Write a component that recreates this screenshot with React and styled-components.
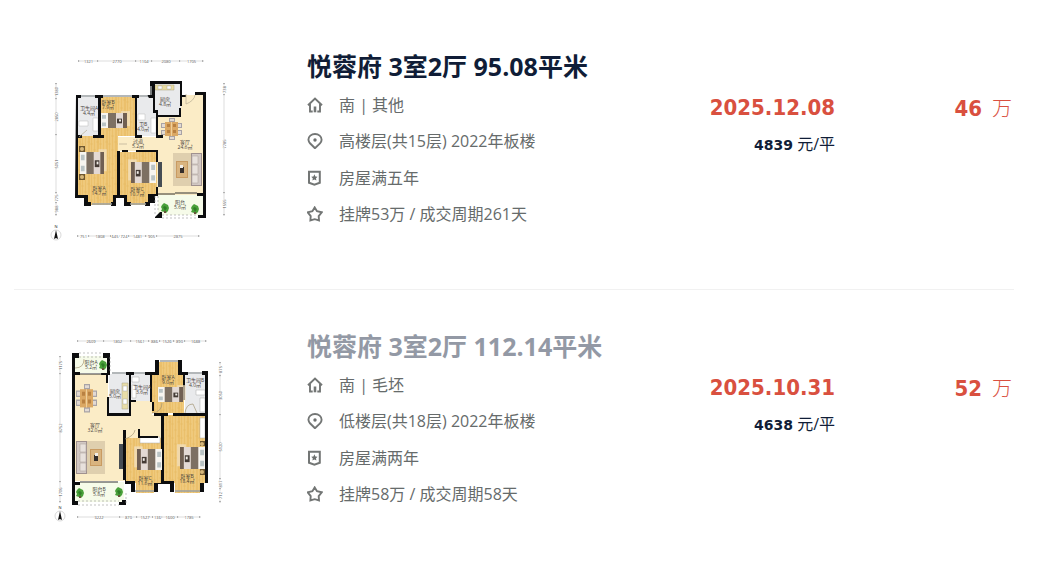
import React from "react";
import styled, { createGlobalStyle } from "styled-components";

const GlobalStyle = createGlobalStyle`
  *, *::before, *::after { box-sizing: border-box; }
  body {
    margin: 0;
    background: #ffffff;
    font-family: "Open Sans", "Noto Sans CJK SC", sans-serif;
  }
`;

const List = styled.main`
  padding: 10px 37px 0 14px;
`;

const Listing = styled.article`
  display: grid;
  grid-template-columns: 293px minmax(0, 1fr) auto 177px;
  height: 280px;
  padding-top: 36px;
  padding-right: 2px;
  border-bottom: 1px solid #f1f1f1;

  &:last-child {
    height: auto;
    border-bottom: 0;
  }
`;

const PlanLink = styled.a`
  display: block;
  padding-left: 34px;
`;

const Plan = styled.svg`
  display: block;
  width: 186px;
  height: 200px;
`;

const Title = styled.h2`
  margin: 0;
  font-size: 25px;
  line-height: 40px;
  font-weight: 700;
  white-space: nowrap;

  a {
    color: ${(p) => (p.$visited ? "#9399a5" : "#101d37")};
    text-decoration: none;
  }
`;

const Facts = styled.ul`
  display: grid;
  grid-template-rows: 37px 36px 38px 34px;
  margin: 0;
  padding: 0;
  list-style: none;
`;

const Fact = styled.li`
  display: flex;
  align-items: center;
  gap: 16px;
  color: #666b6b;
  font-size: 16px;
  line-height: 24px;
  white-space: nowrap;
`;

const Icon = styled.svg`
  flex: none;
  width: 16px;
  height: 16px;
  fill: none;
  stroke: #737675;
  stroke-width: 1.9;
`;

const Deal = styled.div`
  padding-top: 42px;
  text-align: right;
  white-space: nowrap;
`;

const Figure = styled.div`
  color: #d9503f;
  font-family: "DejaVu Sans Condensed", "DejaVu Sans", "Noto Sans CJK SC", sans-serif;
  font-size: 22px;
  line-height: 40px;
  font-weight: 700;
`;

const Unit = styled.span`
  margin-left: 10px;
  font-family: "Noto Sans CJK SC", sans-serif;
  font-size: 20px;
  font-weight: 300;
`;

const UnitPrice = styled.div`
  color: #101d37;
  font-family: "Open Sans", "Noto Sans CJK SC", sans-serif;
  font-size: 16px;
  line-height: 32px;

  strong {
    font-family: "DejaVu Sans", sans-serif;
    font-size: 14px;
  }
`;

const icons = {
  home: (
    <>
      <path d="M1 8.2 8 1.5l7 6.7M3 6.8v7.7h2.7M13 6.8v7.7h-2.7" />
      <path d="M8 9.5v5.8" strokeWidth="2.6" />
    </>
  ),
  pin: (
    <>
      <path d="M8 15.2 3 10.3a6.6 6.6 0 0 1-1.6-3.6C1.4 3.5 4.3 1 8 1s6.6 2.5 6.6 5.7c0 1.3-.6 2.6-1.6 3.6z" />
      <circle cx="8" cy="7" r="1.7" fill="#6d706f" stroke="none" />
    </>
  ),
  badge: (
    <>
      <path d="M2 1.8h10.8v10.9L7.4 14.6 2 12.7z" strokeWidth="2" />
      <path d="m7.4 4.3 1 2.1 2.2.3L9 8.3l.4 2.3-2-1.1-2 1.1.4-2.3-1.6-1.6 2.2-.3z" fill="#6d706f" stroke="none" />
    </>
  ),
  star: <path d="M7.7 1.4 10 5.2l4.8 1.1-3.1 3.8.3 4.4-4.3-1.3-4.3 1.3.3-4.4L.7 6.3l4.7-1.1z" />,
};

const Floor = ({ d, fill }) => <path d={d} fill={fill} />;

function Label({ x, y, name, area }) {
  return (
    <text x={x} y={y} fontSize="5" fill="#4a443d" textAnchor="middle">
      <tspan x={x}>{name}</tspan>
      <tspan x={x} dy="5">{area}</tspan>
    </text>
  );
}

function Bed({ x, y, length = 26, width = 16, flip }) {
  const sx = length / 26;
  const sy = width / 16;
  return (
    <g transform={flip ? `translate(${x + length} ${y}) scale(${-sx} ${sy})` : `translate(${x} ${y}) scale(${sx} ${sy})`}>
      <path d="M20 -2h9v16h-9z" fill="#f2e3c6" opacity=".7" />
      <path d="M0 0h26v16H0z" fill="#e9dfd4" />
      <path d="M0 0h7v16H0z" fill="#f7f5f0" />
      <path d="M1 2h4v4H1zM1 10h4v4H1z" fill="#b9c3c4" />
      <path d="M7 0h8v16H7z" fill="#7d7063" />
      <path d="M15 0h7v16h-7z" fill="#e3d9d4" />
      <path d="M22 0h4v16h-4z" fill="#705f52" />
      <path d="M16 6h5v5h-5z" fill="#453b35" />
      <path d="M18 7h2v2h-2z" fill="#f2eee8" />
    </g>
  );
}

function Dining({ x, y, upright }) {
  return (
    <g transform={upright ? `translate(${x} ${y}) scale(1 1.3)` : `translate(${x} ${y})`}>
      <path d="M0 5h21v5H0zM0 12h21v5H0zM8 0h6v22H8z" fill="#a8a3a6" />
      <path d="M1 6h3v3H1zM1 13h3v3H1zM17 6h3v3h-3zM17 13h3v3h-3zM9 1h4v2H9zM9 19h4v2H9z" fill="#e2dad3" />
      <path d="M4 4h13v14H4z" fill="#dba864" />
      <path d="M6 6h3v3H6zM12 6h3v3h-3zM6 12h3v3H6zM12 12h3v3h-3z" fill="#b98142" />
      <path d="M10 4h1v14h-1z" fill="#f0d09b" />
    </g>
  );
}

function Sofa({ x, y, flip }) {
  return (
    <g transform={flip ? `translate(${x + 29} ${y}) scale(-1 1)` : `translate(${x} ${y})`}>
      <path d="M6 0h23v33H6z" fill="#dfcfae" />
      <path d="M0 0h11v33H0z" fill="#a0918f" />
      <path d="M1 1h9v31H1z" fill="#d2c8c4" />
      <path d="M4 3h6v8H4zM4 12h6v9H4zM4 22h6v8H4z" fill="#e8e1dc" stroke="#b3a7a2" strokeWidth=".6" />
      <path d="M14 8h12v17H14z" fill="#c99b62" />
      <path d="M15 9h10v15H15z" fill="#d9b47f" />
      <path d="M18 14h4v6h-4z" fill="#352e2b" />
      <path d="M19 12h3v3h-3z" fill="#f2eee8" />
    </g>
  );
}

function Plant({ x, y }) {
  return (
    <g transform={`translate(${x} ${y})`}>
      <path d="M-1-5 1-4 3-3 4 0 3 3 1 5-1 4-4 3-3 1-4-1-3-3z" fill="#49a03a" />
      <path d="M-2-1 0-2 2 0 0 3z" fill="#2f7d26" />
      <path d="M-1 3h2v2h-2z" fill="#69533b" />
    </g>
  );
}

function Dimensions({ stops, at, vertical }) {
  return (
    <g transform={vertical ? `translate(${at} 0) rotate(90)` : `translate(0 ${at})`} fontSize="4" fill="#505050" textAnchor="middle">
      <path
        d={stops.slice(1).map(([end], i) => `M${stops[i][0] + 1} 0H${end - 1}`).join("")}
        stroke="#c8c8c8"
        strokeWidth=".6"
      />
      {stops.map(([pos]) => (
        <path key={pos} d={`M${pos - 1} -1l2 1-2 1z`} fill="#999" />
      ))}
      {stops.slice(1).map(([end, text], i) => (
        <g key={end}>
          <path d={`M${(stops[i][0] + end) / 2 - 4} -1h8v2h-8z`} fill="#fff" />
          <text x={(stops[i][0] + end) / 2} y="1.5" transform={vertical ? `rotate(180 ${(stops[i][0] + end) / 2} 0)` : undefined}>{text}</text>
        </g>
      ))}
    </g>
  );
}

function Compass({ x, y }) {
  return (
    <g transform={`translate(${x} ${y})`}>
      <circle r="5" fill="#fff" stroke="#c9c9c9" strokeWidth=".7" />
      <path d="M0-5 2 4 0 3-2 4z" fill="#111" />
      <text y="-7" fontSize="4" fill="#222" textAnchor="middle">N</text>
    </g>
  );
}

const GRAY = "#e9eaec";
const WOOD = "#ebc06c";
const CREAM = "#fbecc6";
const BALCONY = "#f6fbe9";

function Grain({ id }) {
  return (
    <defs>
      <pattern id={id} width="9" height="14" patternUnits="userSpaceOnUse">
        <path d="M0 0h9v14H0z" fill={WOOD} />
        <path d="M0 0v14M3 0v14M6 0v14" stroke="#f3d28c" strokeWidth="1" />
        <path d="M0 4h3M3 10h3M6 2h3" stroke="#e3b65e" strokeWidth=".5" />
      </pattern>
    </defs>
  );
}

function FirstPlan() {
  return (
    <Plan viewBox="48 46 186 200" role="img" aria-label="悦蓉府 95.08平米 户型图">
      <Grain id="woodA" />
      <Floor d="M118 137h38V117h25V95h22v100h-46v-44h-39z" fill={CREAM} />
      <Floor d="M78 97h21v39H78zM137 97h16v13h4v26h-20zM152 83h29v33h-29z" fill={GRAY} />
      <Floor d="M101 97h34v39h-17v59h-5v10H88v-10H78v-59h23zM119 152h38v43h-7v10h-23v-10h-8z" fill="url(#woodA)" />
      <Floor d="M158 195h46v20h-46z" fill={BALCONY} />
      <Floor d="M118 137h38v13h-38z" fill={CREAM} />
      <path d="M79 121h9v5h-9zM93 118h5v13h-5zM138 114h7v6h-7zM151 118h5v15h-5z" fill="#fff" stroke="#bbb" strokeWidth=".5" />
      <path d="M155 85h19v5h-19z" fill="#e9dca1" stroke="#a9a07c" strokeWidth=".5" />
      <path d="M158 86h4v3h-4zM167 86h4v3h-4z" fill="#fff" stroke="#999" strokeWidth=".4" />
      <path d="M76 95h5v3h-3v37h4v3h-4v57h10v7h3v4h-7v-8h-9zM95 95h8v3h-2v37h3v3H93v-3h5V98h-3zM132 95h7v3h-2v37h5v3h-7V98h-3zM147 95h3V81h32v14h4v2h-4v9h-2V84h-25v26h3v25h5v3h-7v-25h-3V98h-4zM195 92h11v126h-8v-3h5v-19h-6v-3h6V95h-8zM157 115h22v-7h2v9h-24zM117 151h3v44h7v7h4v4h-7v-8h-8v8h-5v-4h2v-7h4zM136 150h22v12h-2v-10h-20zM122 150h6v2h-6zM156 187h2v9h-3v7h-5v3h-5v-4h3v-8h8zM155 217 160 212h2v6h-7z" fill="#0c0d0f" />
      <path d="M92 204h20M130 204h16M81 96h14M103 96h29M139 96h9M151 86v9" stroke="#9ba0a2" strokeWidth="1.5" />
      <path d="M158 194h17M175 193h22" stroke="#333" />
      <path d="M158 196v16M155 196v20M162 215h36M162 218h36" fill="none" stroke="#999" strokeWidth=".6" strokeDasharray="2 2" />
      <path d="M186 94v10q8-3 9-9M119 144h8M79 137l8-7" fill="none" stroke="#b8ad94" strokeWidth=".7" />
      <Bed x={101} y={113} width={15} />
      <Bed x={80} y={152} length={24} width={22} />
      <Bed x={131} y={162} length={25} width={21} flip />
      <path d="M79 146h6v6h-6zM79 174h6v6h-6z" fill="#6e572f" />
      <circle cx="82" cy="149" r="2" fill="#d6b77a" />
      <circle cx="82" cy="177" r="2" fill="#d6b77a" />
      <Dining x={161} y={118} />
      <Sofa x={173} y={153} flip />
      <path d="M158 162h4v25h-4z" fill="#464d54" />
      <Plant x={165} y={208} />
      <Plant x={195} y={209} />
      <Label x={89} y={110} name="卫生间A" area="4.4㎡" />
      <Label x={108} y={104} name="卧室B" area="7.9㎡" />
      <Label x={165} y={101} name="厨房" area="4.8㎡" />
      <Label x={143} y={126} name="卫B" area="4.0㎡" />
      <Label x={138} y={143} name="过道" area="5.2㎡" />
      <Label x={185} y={144} name="客厅" area="24.6㎡" />
      <Label x={99} y={190} name="卧室A" area="14.7㎡" />
      <Label x={137} y={191} name="卧室C" area="10.7㎡" />
      <Label x={180} y={204} name="阳台" area="5.6㎡" />
      <Dimensions at={61} stops={[[79], [98, "1321"], [136, "2770"], [152, "1104"], [180, "2080"], [203, "1705"]]} />
      <Dimensions at={56} vertical stops={[[84], [99, "1380"], [135, "2850"], [193, "5051"], [203, "775"], [215, "988"]]} />
      <Dimensions at={224} vertical stops={[[84], [95, "738"], [193, "7785"], [215, "1555"]]} />
      <Dimensions at={236} stops={[[78], [89, "751"], [111, "1808"], [119, "645"], [129, "724"], [146, "1481"], [157, "905"], [199, "2875"]]} />
      <Compass x={56} y={235} />
    </Plan>
  );
}

function SecondPlan() {
  return (
    <Plan viewBox="48 326 186 200" role="img" aria-label="悦蓉府 112.14平米 户型图">
      <Grain id="woodB" />
      <Floor d="M74 374h34v41h23v-15h21v15h10v23h-37v43H74z" fill={CREAM} />
      <Floor d="M109 374h20v40h-20zM131 374h20v27h-20zM185 374h21v40h-21z" fill={GRAY} />
      <Floor d="M158 362h21v12h5v39h-32v-39h6zM125 438h36v45h-7v10h-18v-10h-11zM163 415h43v68h-6v10h-25v-10h-12z" fill="url(#woodB)" />
      <Floor d="M75 356h33v17H75zM75 482h49v20H75z" fill={BALCONY} />
      <path d="M122 383h6v26h-6z" fill="#e8dda8" stroke="#aaa38a" strokeWidth=".5" />
      <path d="M123 386h4v5h-4zM123 399h4v5h-4zM132 377h7v5h-7zM132 385h4v13h-4zM196 390h9v5h-9zM200 398h5v14h-5zM140 437h20v6h-20zM200 418h5v20h-5z" fill="#fff" stroke="#aaa" strokeWidth=".5" />
      <path d="M72 353h7v5h-4v14h5v3h-5v107h5v3h-5v16h3v4h-6zM103 353h7v22h-2v8h-2v-8h-5v-2h6v-15h-4zM107 397h2v16h20v-38h-3v-3h8v3h-3v25h5v2h-5v14h-24zM145 372h10v-12h4v15h-7v27h-2v-27h-5zM178 360h4v12h6v3h-3v25h-2v-25h-5zM202 371h6v112h-4v9h-4v-9h5v-67h-32v-3h32v-38h-3zM154 413h14v3h-4v65h10v11h-4v-8h-12v8h-4v-9h7v-67h-7zM152 402h2v9h-2zM123 430h3v51h9v11h-4v-8h-6v-4h-2zM138 429h2v7h18v2h-20zM122 500h4v5h-7v-3h3z" fill="#0c0d0f" />
      <path d="M160 361h18M112 373h14M134 373h11M188 373h14M135 491h19M175 491h25" stroke="#9ba0a2" strokeWidth="1.5" />
      <path d="M80 374h22M80 482h38" stroke="#333" />
      <path d="M79 353h24M79 357h24M78 501h41M78 505h41M126 493v12M110 357v15" fill="none" stroke="#999" strokeWidth=".6" strokeDasharray="2 2" />
      <path d="M75 368q9 0 9-9M152 413q10-1 10-10M185 413q1-9 8-9l4 9M125 439q9-3 10-9" fill="none" stroke="#a59776" strokeWidth=".7" />
      <Dining x={76} y={384} upright />
      <Sofa x={76} y={441} />
      <path d="M119 444h4v25h-4z" fill="#464d54" />
      <Bed x={158} y={387} length={25} width={15} />
      <Bed x={137} y={449} length={25} width={21} flip />
      <Bed x={180} y={447} length={25} width={22} flip />
      <path d="M200 441h5v5h-5zM200 469h5v6h-5z" fill="#6e572f" />
      <circle cx="202" cy="444" r="2" fill="#d6b77a" />
      <circle cx="202" cy="472" r="2" fill="#d6b77a" />
      <Plant x={103} y={365} />
      <Plant x={80} y={493} />
      <Plant x={119} y={492} />
      <Label x={91} y={364} name="阳台A" area="5.2㎡" />
      <Label x={115} y={393} name="厨房" area="5.0㎡" />
      <Label x={142} y={389} name="卫生间A" area="3.6㎡" />
      <Label x={168} y={379} name="卧室A" area="9.0㎡" />
      <Label x={195} y={382} name="卫生间B" area="4.0㎡" />
      <Label x={95} y={427} name="客厅" area="32.0㎡" />
      <Label x={145} y={480} name="卧室C" area="11.6㎡" />
      <Label x={187} y={478} name="卧室B" area="18.4㎡" />
      <Label x={99} y={491} name="阳台B" area="5.8㎡" />
      <Dimensions at={341} stops={[[78], [104, "2609"], [131, "1802"], [149, "1561"], [160, "886"], [174, "1526"], [185, "890"], [206, "1688"]]} />
      <Dimensions at={60} vertical stops={[[357], [374, "1175"], [482, "8752"], [502, "1706"]]} />
      <Dimensions at={220} vertical stops={[[363], [376, "875"], [415, "3050"], [479, "5120"], [489, "817"], [502, "712"]]} />
      <Dimensions at={517} stops={[[78], [120, "3222"], [137, "870"], [153, "1527"], [162, "136"], [178, "1600"], [200, "1785"]]} />
      <Compass x={60} y={516} />
    </Plan>
  );
}

const listings = [
  {
    title: "悦蓉府 3室2厅 95.08平米",
    plan: FirstPlan,
    facts: ["南 | 其他", "高楼层(共15层) 2022年板楼", "房屋满五年", "挂牌53万 / 成交周期261天"],
    date: "2025.12.08",
    unitPrice: "4839",
    total: "46",
  },
  {
    title: "悦蓉府 3室2厅 112.14平米",
    visited: true,
    plan: SecondPlan,
    facts: ["南 | 毛坯", "低楼层(共18层) 2022年板楼", "房屋满两年", "挂牌58万 / 成交周期58天"],
    date: "2025.10.31",
    unitPrice: "4638",
    total: "52",
  },
];

const factIcons = ["home", "pin", "badge", "star"];

export default function App() {
  return (
    <>
      <GlobalStyle />
      <List>
        {listings.map(({ title, visited, plan: FloorPlan, facts, date, unitPrice, total }) => (
          <Listing key={title}>
            <PlanLink href="#">
              <FloorPlan />
            </PlanLink>
            <div>
              <Title $visited={visited}>
                <a href="#">{title}</a>
              </Title>
              <Facts>
                {facts.map((fact, i) => (
                  <Fact key={fact}>
                    <Icon viewBox="0 0 16 16" aria-hidden="true">{icons[factIcons[i]]}</Icon>
                    {fact}
                  </Fact>
                ))}
              </Facts>
            </div>
            <Deal>
              <Figure>{date}</Figure>
              <UnitPrice>
                <strong>{unitPrice}</strong> 元/平
              </UnitPrice>
            </Deal>
            <Deal>
              <Figure>
                {total}
                <Unit>万</Unit>
              </Figure>
            </Deal>
          </Listing>
        ))}
      </List>
    </>
  );
}
